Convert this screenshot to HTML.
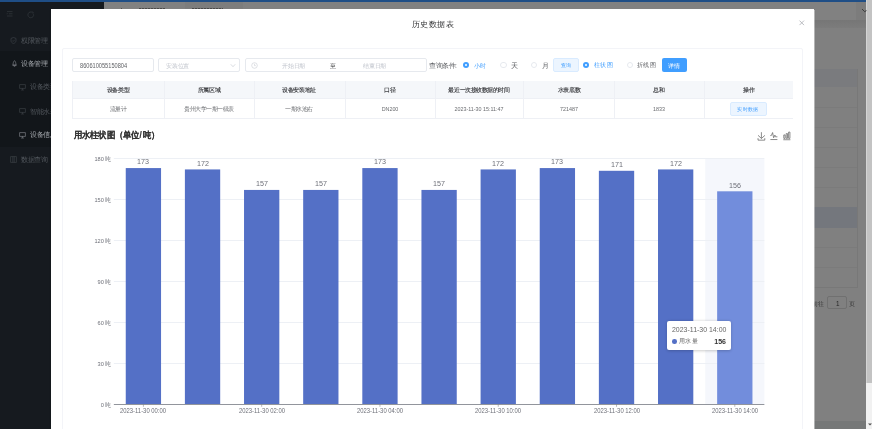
<!DOCTYPE html>
<html><head><meta charset="utf-8">
<style>
*{box-sizing:border-box;margin:0;padding:0}
html,body{width:872px;height:429px;overflow:hidden}
body{position:relative;background:#808080;font-family:"Liberation Sans",sans-serif;color:#606266}
.a{position:absolute;white-space:nowrap}
.t{position:absolute;white-space:nowrap;line-height:1;backface-visibility:hidden}
.c{text-align:center}
svg{position:absolute}
</style></head><body>
<div class="a" style="left:0px;top:0px;width:866px;height:2px;background:#1f4e86"></div>
<div class="a" style="left:0px;top:2px;width:104px;height:427px;background:#161a1f"></div>
<div class="a" style="left:0px;top:50.5px;width:104px;height:96.5px;background:#12161a"></div>
<div class="a" style="left:104px;top:2px;width:762px;height:18px;background:#818181"></div>
<div class="a" style="left:185px;top:2px;width:58px;height:7px;background:#7d7d7d"></div>
<div class="a" style="left:855.5px;top:2px;width:10.5px;height:18px;background:#7c7c7c"></div>
<div class="a" style="left:104px;top:20px;width:762px;height:8px;background:linear-gradient(#767676,#7c7c7c)"></div>

<svg style="left:6px;top:10px" width="8" height="8" viewBox="0 0 8 8"><path d="M1 1.6H6.5M2.8 3.8H6.5M1 6H6.5" stroke="#34393e" stroke-width="0.7"/><path d="M0.8 3.1L1.9 3.8L0.8 4.5Z" fill="#34393e"/></svg>
<svg style="left:26.5px;top:10.5px" width="8" height="8" viewBox="0 0 8 8"><path d="M6.6 3.2A2.9 2.9 0 1 1 5.6 1.6" stroke="#34393e" stroke-width="0.7" fill="none"/><path d="M5 0.6L6.5 1.4L5.8 2.9" stroke="#34393e" stroke-width="0.5" fill="none"/></svg>
<svg style="left:10px;top:36.5px" width="7" height="7" viewBox="0 0 7 7"><path d="M3.5 0.5L6 1.4V3.6C6 5 5 6 3.5 6.6C2 6 1 5 1 3.6V1.4Z M2.4 3.6L3.2 4.4L4.7 2.8" stroke="#464b51" stroke-width="0.55" fill="none"/></svg>
<svg style="left:10.5px;top:59.5px" width="7" height="7" viewBox="0 0 7 7"><path d="M3.5 0.6C2.5 1.6 2 3.2 2 5.2H5C5 3.2 4.5 1.6 3.5 0.6ZM1.3 5.2H5.7M2.8 6.3H4.2" stroke="#8d9197" stroke-width="0.6" fill="none"/></svg>
<svg style="left:19px;top:83.5px" width="7" height="7" viewBox="0 0 7 7"><path d="M0.6 0.6H6.4V4.4H0.6Z M3.5 4.4V5.8M2.1 6H4.9" stroke="#464b51" stroke-width="0.55" fill="none"/></svg>
<svg style="left:19px;top:107.5px" width="7" height="7" viewBox="0 0 7 7"><path d="M0.6 0.6H6.4V4.4H0.6Z M3.5 4.4V5.8M2.1 6H4.9" stroke="#464b51" stroke-width="0.55" fill="none"/></svg>
<svg style="left:19px;top:131.5px" width="7" height="7" viewBox="0 0 7 7"><path d="M0.6 0.6H6.4V4.4H0.6Z M3.5 4.4V5.8M2.1 6H4.9" stroke="#8d9197" stroke-width="0.6" fill="none"/></svg>
<svg style="left:9.5px;top:155.5px" width="7" height="7" viewBox="0 0 7 7"><path d="M0.6 0.6H6.4V6.4H0.6Z M2.8 0.6V6.4M4.2 0.6V6.4" stroke="#464b51" stroke-width="0.55" fill="none"/></svg>
<div class="t" style="left:21.2px;top:37.16px;font-size:20.0px;color:#52575d;transform:scale(0.3300,0.3300);transform-origin:0 0;">权限管理</div>
<div class="t" style="left:21.2px;top:59.96px;font-size:20.0px;color:#a3a7ac;transform:scale(0.3300,0.3300);transform-origin:0 0;">设备管理</div>
<div class="t" style="left:30.2px;top:83.36px;font-size:20.0px;color:#52575d;transform:scale(0.3300,0.3300);transform-origin:0 0;">设备类型</div>
<div class="t" style="left:30.2px;top:107.76px;font-size:20.0px;color:#52575d;transform:scale(0.3300,0.3300);transform-origin:0 0;">智能水表</div>
<div class="t" style="left:30.2px;top:131.36px;font-size:20.0px;color:#a3a7ac;transform:scale(0.3300,0.3300);transform-origin:0 0;">设备信息</div>
<div class="t" style="left:21.2px;top:155.66px;font-size:20.0px;color:#52575d;transform:scale(0.3300,0.3300);transform-origin:0 0;">数据查询</div>
<div class="a" style="left:120.5px;top:8.4px;width:1.5px;height:0.7px;background:#505050"></div>
<div class="a" style="left:139px;top:8.3px;width:25.5px;height:0.8px;background:repeating-linear-gradient(90deg,#4a4a4a 0 2px,#707070 2px 3px)"></div>
<div class="a" style="left:192px;top:8.3px;width:31px;height:0.8px;background:repeating-linear-gradient(90deg,#4a4a4a 0 2px,#707070 2px 3px)"></div>
<div class="a" style="left:804px;top:68.7px;width:53px;height:18.6px;background:#7a7b7e"></div>
<div class="a" style="left:804px;top:207px;width:53px;height:20.5px;background:#74777d"></div>
<div class="a" style="left:804px;top:68.7px;width:53.5px;height:219px;border-right:0.5px solid #787878;border-bottom:0.5px solid #787878"></div>
<div class="a" style="left:804px;top:107px;width:53px;height:0px;border-top:0.5px solid #7b7b7b"></div>
<div class="a" style="left:804px;top:127px;width:53px;height:0px;border-top:0.5px solid #7b7b7b"></div>
<div class="a" style="left:804px;top:147px;width:53px;height:0px;border-top:0.5px solid #7b7b7b"></div>
<div class="a" style="left:804px;top:167px;width:53px;height:0px;border-top:0.5px solid #7b7b7b"></div>
<div class="a" style="left:804px;top:187px;width:53px;height:0px;border-top:0.5px solid #7b7b7b"></div>
<div class="a" style="left:804px;top:247px;width:53px;height:0px;border-top:0.5px solid #7b7b7b"></div>
<div class="a" style="left:804px;top:267px;width:53px;height:0px;border-top:0.5px solid #7b7b7b"></div>
<div class="t" style="left:812.3px;top:301.28px;font-size:20.0px;color:#333;transform:scale(0.3150,0.3150);transform-origin:0 0;">前往</div>
<div class="a" style="left:826.7px;top:296.4px;width:20.6px;height:12.6px;border:0.5px solid #707070;border-radius:2px"></div>
<div class="t" style="left:835.6px;top:301.28px;font-size:20.0px;color:#252525;transform:scale(0.3150,0.3150);transform-origin:0 0;">1</div>
<div class="t" style="left:849.3px;top:301.28px;font-size:20.0px;color:#333;transform:scale(0.3150,0.3150);transform-origin:0 0;">页</div>
<div class="a" style="left:866px;top:0px;width:6px;height:429px;background:#f1f1f1"></div>
<div class="a" style="left:866px;top:0px;width:6px;height:383px;background:#c3c3c3;border-left:1px solid #d4d4d4"></div>
<svg style="left:868px;top:422.5px" width="4" height="3" viewBox="0 0 4 3"><path d="M0 0.5H4L2 2.5Z" fill="#505050"/></svg>
<svg style="left:860px;top:7px" width="7" height="6" viewBox="0 0 7 6"><path d="M2 2L4.6 4.6L6.5 3.6" stroke="#2a2a2a" stroke-width="0.8" fill="none"/></svg>
<div class="a" style="left:814px;top:421px;width:52px;height:8px;background:#767878"></div>
<div class="a" style="left:51px;top:9px;width:763px;height:430px;background:#fff;box-shadow:0 0.5px 1.5px rgba(0,0,0,.35)"></div>
<div class="a" style="left:814px;top:9.5px;width:1px;height:420px;background:rgba(255,255,255,.45)"></div>
<div class="t" style="left:412px;top:20.04px;font-size:20.0px;color:#303133;transform:scale(0.4200,0.4200);transform-origin:0 0;">历史数据表</div>
<svg style="left:796px;top:18px" width="12" height="12" viewBox="0 0 12 12"><path d="M3.5 2.6L8 7.1M8 2.6L3.5 7.1" stroke="#a9acb2" stroke-width="0.8"/></svg>
<div class="a" style="left:62px;top:48px;width:740.5px;height:400px;border:1px solid #f3f4f8;border-radius:2px"></div>
<div class="a" style="left:72px;top:58px;width:81.5px;height:13.8px;border:1px solid #e6e9ee;border-radius:2px"></div>
<div class="t" style="left:79.5px;top:62.38px;font-size:20.0px;color:#606266;transform:scale(0.2822,0.3400);transform-origin:0 0;">860610055150804</div>
<div class="a" style="left:158.4px;top:58px;width:82px;height:13.8px;border:1px solid #e6e9ee;border-radius:2px"></div>
<div class="t" style="left:166px;top:62.80px;font-size:20.0px;color:#c0c4cc;transform:scale(0.2875,0.2875);transform-origin:0 0;">安装位置</div>
<svg style="left:229.5px;top:62.5px" width="6" height="5" viewBox="0 0 6 5"><path d="M0.8 1.3L3 3.7L5.2 1.3" stroke="#c0c4cc" stroke-width="0.6" fill="none"/></svg>
<div class="a" style="left:245.2px;top:58px;width:182px;height:13.8px;border:1px solid #e6e9ee;border-radius:2px"></div>
<svg style="left:250.5px;top:61.5px" width="7" height="7" viewBox="0 0 7 7"><circle cx="3.5" cy="3.5" r="2.8" stroke="#c0c4cc" stroke-width="0.5" fill="none"/><path d="M3.5 1.8V3.6H4.8" stroke="#c0c4cc" stroke-width="0.5" fill="none"/></svg>
<div class="t" style="left:281.9px;top:62.80px;font-size:20.0px;color:#c0c4cc;transform:scale(0.2875,0.2875);transform-origin:0 0;">开始日期</div>
<div class="t" style="left:330.2px;top:62.70px;font-size:20.0px;color:#303133;transform:scale(0.3000,0.3000);transform-origin:0 0;">至</div>
<div class="t" style="left:362.7px;top:62.80px;font-size:20.0px;color:#c0c4cc;transform:scale(0.2875,0.2875);transform-origin:0 0;">结束日期</div>
<div class="t" style="left:429.4px;top:62.00px;font-size:20.0px;color:#606266;transform:scale(0.3250,0.3250);transform-origin:0 0;">查询条件:</div>
<div class="a" style="left:462.8px;top:61.89999999999999px;width:6.4px;height:6.4px;border-radius:50%;background:#409eff"></div>
<div class="a" style="left:464.9px;top:63.99999999999999px;width:2.2px;height:2.2px;border-radius:50%;background:#fff"></div>
<div class="t" style="left:473.7px;top:62.52px;font-size:20.0px;color:#409eff;transform:scale(0.3225,0.3225);transform-origin:0 0;">小时</div>
<div class="a" style="left:500.3px;top:61.89999999999999px;width:6.4px;height:6.4px;border-radius:50%;border:1px solid #e6e9ee"></div>
<div class="t" style="left:511px;top:62.46px;font-size:20.0px;color:#606266;transform:scale(0.3300,0.3300);transform-origin:0 0;">天</div>
<div class="a" style="left:531.0999999999999px;top:61.89999999999999px;width:6.4px;height:6.4px;border-radius:50%;border:1px solid #e6e9ee"></div>
<div class="t" style="left:541.8px;top:62.46px;font-size:20.0px;color:#606266;transform:scale(0.3300,0.3300);transform-origin:0 0;">月</div>
<div class="a" style="left:553.3px;top:58px;width:25.4px;height:13.8px;border:1px solid #d9ebff;background:#ecf5ff;border-radius:2px"></div>
<div class="t c" style="left:366.00px;width:400px;top:62.42px;font-size:20.0px;color:#409eff;transform:scale(0.2725,0.2725);transform-origin:50% 0;">查询</div>
<div class="a" style="left:583.0px;top:61.89999999999999px;width:6.4px;height:6.4px;border-radius:50%;background:#409eff"></div>
<div class="a" style="left:585.1px;top:63.99999999999999px;width:2.2px;height:2.2px;border-radius:50%;background:#fff"></div>
<div class="t" style="left:594px;top:62.24px;font-size:20.0px;color:#409eff;transform:scale(0.3200,0.3200);transform-origin:0 0;">柱状图</div>
<div class="a" style="left:626.8px;top:61.89999999999999px;width:6.4px;height:6.4px;border-radius:50%;border:1px solid #e6e9ee"></div>
<div class="t" style="left:637.3px;top:62.24px;font-size:20.0px;color:#606266;transform:scale(0.3200,0.3200);transform-origin:0 0;">折线图</div>
<div class="a" style="left:661.6px;top:58px;width:25.2px;height:13.8px;background:#409eff;border-radius:2px"></div>
<div class="t c" style="left:474.20px;width:400px;top:62.86px;font-size:20.0px;color:#fff;transform:scale(0.2800,0.2800);transform-origin:50% 0;">详情</div>
<div class="a" style="left:72px;top:81.1px;width:721.2px;height:17.4px;background:#f5f7fa"></div>
<div class="a" style="left:72px;top:81.1px;width:721.2px;height:37.5px;border:0.6px solid #eef0f5;border-top:0;border-right:0"></div>
<div class="a" style="left:72px;top:98.2px;width:721.2px;height:0px;border-top:0.6px solid #eef0f5"></div>
<div class="a" style="left:164.3px;top:81.1px;width:0px;height:37.5px;border-left:0.6px solid #eef0f5"></div>
<div class="a" style="left:254.4px;top:81.1px;width:0px;height:37.5px;border-left:0.6px solid #eef0f5"></div>
<div class="a" style="left:344.5px;top:81.1px;width:0px;height:37.5px;border-left:0.6px solid #eef0f5"></div>
<div class="a" style="left:434.5px;top:81.1px;width:0px;height:37.5px;border-left:0.6px solid #eef0f5"></div>
<div class="a" style="left:523.4px;top:81.1px;width:0px;height:37.5px;border-left:0.6px solid #eef0f5"></div>
<div class="a" style="left:613.7px;top:81.1px;width:0px;height:37.5px;border-left:0.6px solid #eef0f5"></div>
<div class="a" style="left:703.8px;top:81.1px;width:0px;height:37.5px;border-left:0.6px solid #eef0f5"></div>
<div class="t c" style="left:-81.85px;width:400px;top:87.48px;font-size:20.0px;color:#45464a;transform:scale(0.2775,0.2775);transform-origin:50% 0;font-weight:bold">设备类型</div>
<div class="t c" style="left:-81.85px;width:400px;top:105.78px;font-size:20.0px;color:#6a6c70;transform:scale(0.2775,0.2775);transform-origin:50% 0;">流量计</div>
<div class="t c" style="left:9.35px;width:400px;top:87.48px;font-size:20.0px;color:#45464a;transform:scale(0.2775,0.2775);transform-origin:50% 0;font-weight:bold">所属区域</div>
<div class="t c" style="left:9.35px;width:400px;top:105.78px;font-size:20.0px;color:#6a6c70;transform:scale(0.2775,0.2775);transform-origin:50% 0;">贵州大学一期一级表</div>
<div class="t c" style="left:99.45px;width:400px;top:87.48px;font-size:20.0px;color:#45464a;transform:scale(0.2775,0.2775);transform-origin:50% 0;font-weight:bold">设备安装地址</div>
<div class="t c" style="left:99.45px;width:400px;top:105.78px;font-size:20.0px;color:#6a6c70;transform:scale(0.2775,0.2775);transform-origin:50% 0;">一期水池右</div>
<div class="t c" style="left:189.50px;width:400px;top:87.48px;font-size:20.0px;color:#45464a;transform:scale(0.2775,0.2775);transform-origin:50% 0;font-weight:bold">口径</div>
<div class="t c" style="left:189.50px;width:400px;top:105.56px;font-size:20.0px;color:#6a6c70;transform:scale(0.2684,0.3050);transform-origin:50% 0;">DN200</div>
<div class="t c" style="left:278.95px;width:400px;top:87.48px;font-size:20.0px;color:#45464a;transform:scale(0.2775,0.2775);transform-origin:50% 0;font-weight:bold">最近一次接收数据的时间</div>
<div class="t c" style="left:278.95px;width:400px;top:105.56px;font-size:20.0px;color:#6a6c70;transform:scale(0.2684,0.3050);transform-origin:50% 0;">2023-11-30 15:11:47</div>
<div class="t c" style="left:368.55px;width:400px;top:87.48px;font-size:20.0px;color:#45464a;transform:scale(0.2775,0.2775);transform-origin:50% 0;font-weight:bold">水表底数</div>
<div class="t c" style="left:368.55px;width:400px;top:105.56px;font-size:20.0px;color:#6a6c70;transform:scale(0.2684,0.3050);transform-origin:50% 0;">721487</div>
<div class="t c" style="left:458.75px;width:400px;top:87.48px;font-size:20.0px;color:#45464a;transform:scale(0.2775,0.2775);transform-origin:50% 0;font-weight:bold">总和</div>
<div class="t c" style="left:458.75px;width:400px;top:105.56px;font-size:20.0px;color:#6a6c70;transform:scale(0.2684,0.3050);transform-origin:50% 0;">1833</div>
<div class="t c" style="left:548.50px;width:400px;top:87.48px;font-size:20.0px;color:#45464a;transform:scale(0.2775,0.2775);transform-origin:50% 0;font-weight:bold">操作</div>
<div class="a" style="left:730.2px;top:102px;width:36.5px;height:13.6px;border:1px solid #d9ebff;background:#ecf5ff;border-radius:2px"></div>
<div class="t c" style="left:548.40px;width:400px;top:106.14px;font-size:20.0px;color:#409eff;transform:scale(0.2700,0.2700);transform-origin:50% 0;">实时数据</div>
<div class="t" style="left:74.2px;top:131.22px;font-size:20.0px;color:#333;transform:scale(0.4067,0.4350);transform-origin:0 0;font-weight:bold;-webkit-text-stroke:0.35px #333">用水柱状图（单位<span style="margin:0 2px 0 1px">/</span>吨）</div>
<svg style="left:0;top:0" width="872" height="429" viewBox="0 0 872 429"><g fill="none" stroke="#666" stroke-width="5.5">
<path transform="translate(757.4,132.2) scale(0.137)" d="M4.7,22.9L29.3,45.5L54.7,23.4M4.6,43.6L4.6,58L53.8,58L53.8,43.6M29.2,45.1L29.2,0"/>
<path transform="translate(769.8,131.6) scale(0.137)" d="M4.1,28.9h7.1l9.3-22l7.4,38l9.7-19.7l3,12.8h14.9M4.1,58h51.4"/>
<path transform="translate(782.9,131.8) scale(0.132,0.137)" d="M6.7,22.9h10V48h-10V22.9zM24.9,13h10v35h-10V13zM43.2,2h10v46h-10V2zM3.1,58h53.7"/>
</g></svg>
<svg style="left:0;top:0" width="872" height="429" viewBox="0 0 872 429"><rect x="705.23" y="158.5" width="59.14" height="246.00" fill="#f5f7fc"/><line x1="113.83" x2="764.37" y1="363.50" y2="363.50" stroke="#edf0f5" stroke-width="1"/><line x1="113.83" x2="764.37" y1="322.50" y2="322.50" stroke="#edf0f5" stroke-width="1"/><line x1="113.83" x2="764.37" y1="281.50" y2="281.50" stroke="#edf0f5" stroke-width="1"/><line x1="113.83" x2="764.37" y1="240.50" y2="240.50" stroke="#edf0f5" stroke-width="1"/><line x1="113.83" x2="764.37" y1="199.50" y2="199.50" stroke="#edf0f5" stroke-width="1"/><line x1="113.83" x2="764.37" y1="158.50" y2="158.50" stroke="#edf0f5" stroke-width="1"/><rect x="125.75" y="168.07" width="35.3" height="236.43" fill="#5470c6"/><rect x="184.89" y="169.43" width="35.3" height="235.07" fill="#5470c6"/><rect x="244.03" y="189.93" width="35.3" height="214.57" fill="#5470c6"/><rect x="303.17" y="189.93" width="35.3" height="214.57" fill="#5470c6"/><rect x="362.31" y="168.07" width="35.3" height="236.43" fill="#5470c6"/><rect x="421.45" y="189.93" width="35.3" height="214.57" fill="#5470c6"/><rect x="480.59" y="169.43" width="35.3" height="235.07" fill="#5470c6"/><rect x="539.73" y="168.07" width="35.3" height="236.43" fill="#5470c6"/><rect x="598.87" y="170.80" width="35.3" height="233.70" fill="#5470c6"/><rect x="658.01" y="169.43" width="35.3" height="235.07" fill="#5470c6"/><rect x="717.15" y="191.30" width="35.3" height="213.20" fill="#728ddc"/><line x1="113.83" x2="764.37" y1="404.5" y2="404.5" stroke="#92959c" stroke-width="1"/><line x1="143.40" x2="143.40" y1="404.5" y2="406.8" stroke="#6e7079" stroke-width="0.5"/><line x1="261.68" x2="261.68" y1="404.5" y2="406.8" stroke="#6e7079" stroke-width="0.5"/><line x1="379.96" x2="379.96" y1="404.5" y2="406.8" stroke="#6e7079" stroke-width="0.5"/><line x1="498.24" x2="498.24" y1="404.5" y2="406.8" stroke="#6e7079" stroke-width="0.5"/><line x1="616.52" x2="616.52" y1="404.5" y2="406.8" stroke="#6e7079" stroke-width="0.5"/><line x1="734.80" x2="734.80" y1="404.5" y2="406.8" stroke="#6e7079" stroke-width="0.5"/></svg>
<div class="t c" style="left:-56.60px;width:400px;top:157.35px;font-size:20.0px;color:#6e7079;transform:scale(0.3588,0.3900);transform-origin:50% 0;">173</div>
<div class="t c" style="left:2.54px;width:400px;top:158.71px;font-size:20.0px;color:#6e7079;transform:scale(0.3588,0.3900);transform-origin:50% 0;">172</div>
<div class="t c" style="left:61.68px;width:400px;top:179.21px;font-size:20.0px;color:#6e7079;transform:scale(0.3588,0.3900);transform-origin:50% 0;">157</div>
<div class="t c" style="left:120.82px;width:400px;top:179.21px;font-size:20.0px;color:#6e7079;transform:scale(0.3588,0.3900);transform-origin:50% 0;">157</div>
<div class="t c" style="left:179.96px;width:400px;top:157.35px;font-size:20.0px;color:#6e7079;transform:scale(0.3588,0.3900);transform-origin:50% 0;">173</div>
<div class="t c" style="left:239.10px;width:400px;top:179.21px;font-size:20.0px;color:#6e7079;transform:scale(0.3588,0.3900);transform-origin:50% 0;">157</div>
<div class="t c" style="left:298.24px;width:400px;top:158.71px;font-size:20.0px;color:#6e7079;transform:scale(0.3588,0.3900);transform-origin:50% 0;">172</div>
<div class="t c" style="left:357.38px;width:400px;top:157.35px;font-size:20.0px;color:#6e7079;transform:scale(0.3588,0.3900);transform-origin:50% 0;">173</div>
<div class="t c" style="left:416.52px;width:400px;top:160.08px;font-size:20.0px;color:#6e7079;transform:scale(0.3588,0.3900);transform-origin:50% 0;">171</div>
<div class="t c" style="left:475.66px;width:400px;top:158.71px;font-size:20.0px;color:#6e7079;transform:scale(0.3588,0.3900);transform-origin:50% 0;">172</div>
<div class="t c" style="left:534.80px;width:400px;top:180.58px;font-size:20.0px;color:#6e7079;transform:scale(0.3588,0.3900);transform-origin:50% 0;">156</div>
<div class="t c" style="left:-56.60px;width:400px;top:407.64px;font-size:20.0px;color:#6e7079;transform:scale(0.2944,0.3200);transform-origin:50% 0;">2023-11-30 00:00</div>
<div class="t c" style="left:61.68px;width:400px;top:407.64px;font-size:20.0px;color:#6e7079;transform:scale(0.2944,0.3200);transform-origin:50% 0;">2023-11-30 02:00</div>
<div class="t c" style="left:179.96px;width:400px;top:407.64px;font-size:20.0px;color:#6e7079;transform:scale(0.2944,0.3200);transform-origin:50% 0;">2023-11-30 04:00</div>
<div class="t c" style="left:298.24px;width:400px;top:407.64px;font-size:20.0px;color:#6e7079;transform:scale(0.2944,0.3200);transform-origin:50% 0;">2023-11-30 10:00</div>
<div class="t c" style="left:416.52px;width:400px;top:407.64px;font-size:20.0px;color:#6e7079;transform:scale(0.2944,0.3200);transform-origin:50% 0;">2023-11-30 12:00</div>
<div class="t c" style="left:534.80px;width:400px;top:407.64px;font-size:20.0px;color:#6e7079;transform:scale(0.2944,0.3200);transform-origin:50% 0;">2023-11-30 14:00</div>
<div class="t" style="left:-189.40px;width:300px;text-align:right;top:401.96px;font-size:20.0px;color:#6e7079;transform:scale(0.2800,0.2800);transform-origin:100% 0;">0&nbsp;吨</div>
<div class="t" style="left:-189.40px;width:300px;text-align:right;top:360.96px;font-size:20.0px;color:#6e7079;transform:scale(0.2800,0.2800);transform-origin:100% 0;">30&nbsp;吨</div>
<div class="t" style="left:-189.40px;width:300px;text-align:right;top:319.96px;font-size:20.0px;color:#6e7079;transform:scale(0.2800,0.2800);transform-origin:100% 0;">60&nbsp;吨</div>
<div class="t" style="left:-189.40px;width:300px;text-align:right;top:278.96px;font-size:20.0px;color:#6e7079;transform:scale(0.2800,0.2800);transform-origin:100% 0;">90&nbsp;吨</div>
<div class="t" style="left:-189.40px;width:300px;text-align:right;top:237.96px;font-size:20.0px;color:#6e7079;transform:scale(0.2800,0.2800);transform-origin:100% 0;">120&nbsp;吨</div>
<div class="t" style="left:-189.40px;width:300px;text-align:right;top:196.96px;font-size:20.0px;color:#6e7079;transform:scale(0.2800,0.2800);transform-origin:100% 0;">150&nbsp;吨</div>
<div class="t" style="left:-189.40px;width:300px;text-align:right;top:155.96px;font-size:20.0px;color:#6e7079;transform:scale(0.2800,0.2800);transform-origin:100% 0;">180&nbsp;吨</div>
<div class="a" style="left:667.3px;top:320.8px;width:63.3px;height:29.2px;background:#fff;border-radius:2px;box-shadow:0 0.5px 3px rgba(0,0,0,.2)"></div>
<div class="t" style="left:671.9px;top:325.66px;font-size:20.0px;color:#666;transform:scale(0.3477,0.3800);transform-origin:0 0;">2023-11-30 14:00</div>
<div class="a" style="left:672.2px;top:339.1px;width:4.6px;height:4.6px;border-radius:50%;background:#5470c6"></div>
<div class="t" style="left:679.1px;top:338.44px;font-size:20.0px;color:#666;transform:scale(0.3200,0.3200);transform-origin:0 0;">用水量</div>
<div class="t" style="left:426.20px;width:300px;text-align:right;top:337.84px;font-size:20.0px;color:#333;transform:scale(0.3515,0.3700);transform-origin:100% 0;font-weight:bold">156</div>
</body></html>
